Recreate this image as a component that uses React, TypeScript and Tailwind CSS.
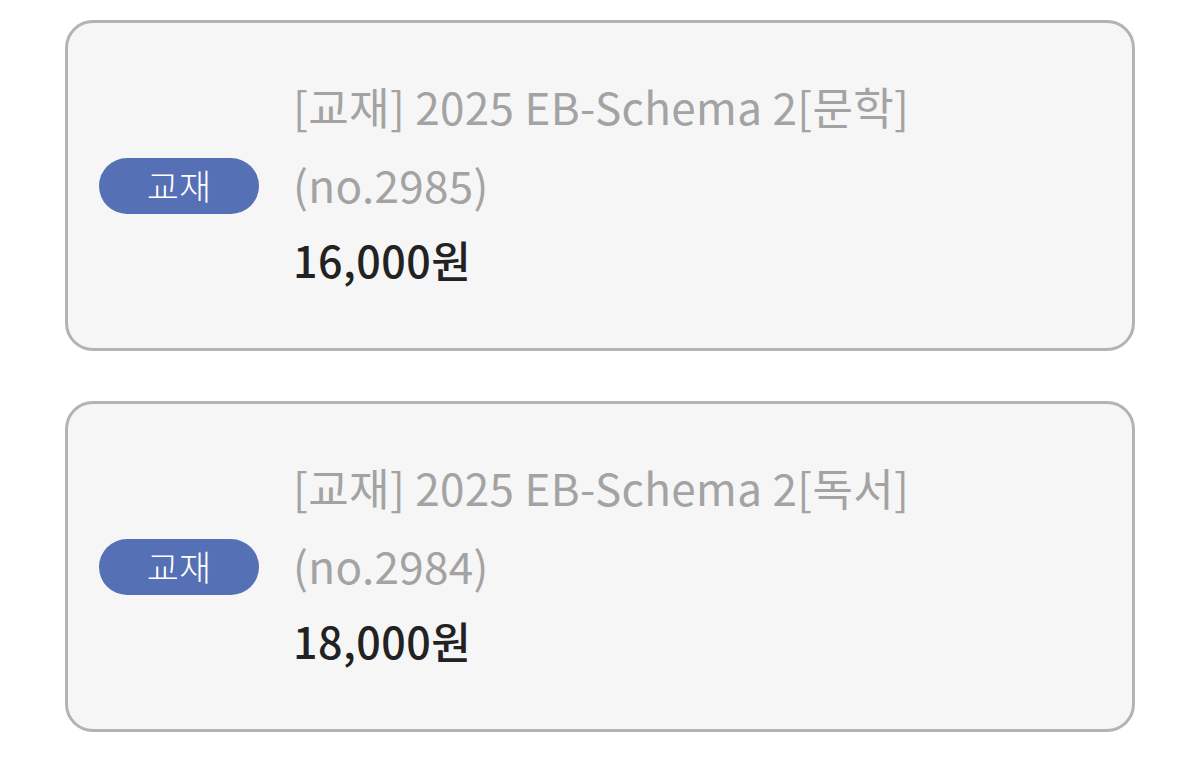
import React from "react";

const items = [
  { title: "[교재] 2025 EB-Schema 2[문학]", no: "(no.2985)", price: "16,000원" },
  { title: "[교재] 2025 EB-Schema 2[독서]", no: "(no.2984)", price: "18,000원" },
];

export default function App() {
  return (
    <div
      className="w-[1200px] h-[757px] bg-white pt-[20px] px-[65px] flex flex-col gap-[50px]"
      style={{ fontFamily: '"Noto Sans CJK KR", "Noto Sans", sans-serif' }}
    >
      {items.map((it) => (
        <div
          key={it.no}
          className="h-[331px] rounded-[28px] border-[3px] border-[#b3b3b3] bg-[#f6f6f6] flex items-center pl-[31px]"
        >
          <div className="w-[160px] h-[56px] rounded-full bg-[#5670b6] flex items-center justify-center text-white text-[35px] font-light leading-none shrink-0 pb-[2px]">
            교재
          </div>
          <div className="ml-[34px] mb-[10px] flex flex-col">
            <div className="text-[44px] leading-[78px] text-[#a3a3a3] tracking-[0.35px]">
              <div>{it.title}</div>
              <div>{it.no}</div>
            </div>
            <div className="text-[43px] leading-[72px] font-medium text-[#222222] tracking-[0.5px]">
              {it.price}
            </div>
          </div>
        </div>
      ))}
    </div>
  );
}
